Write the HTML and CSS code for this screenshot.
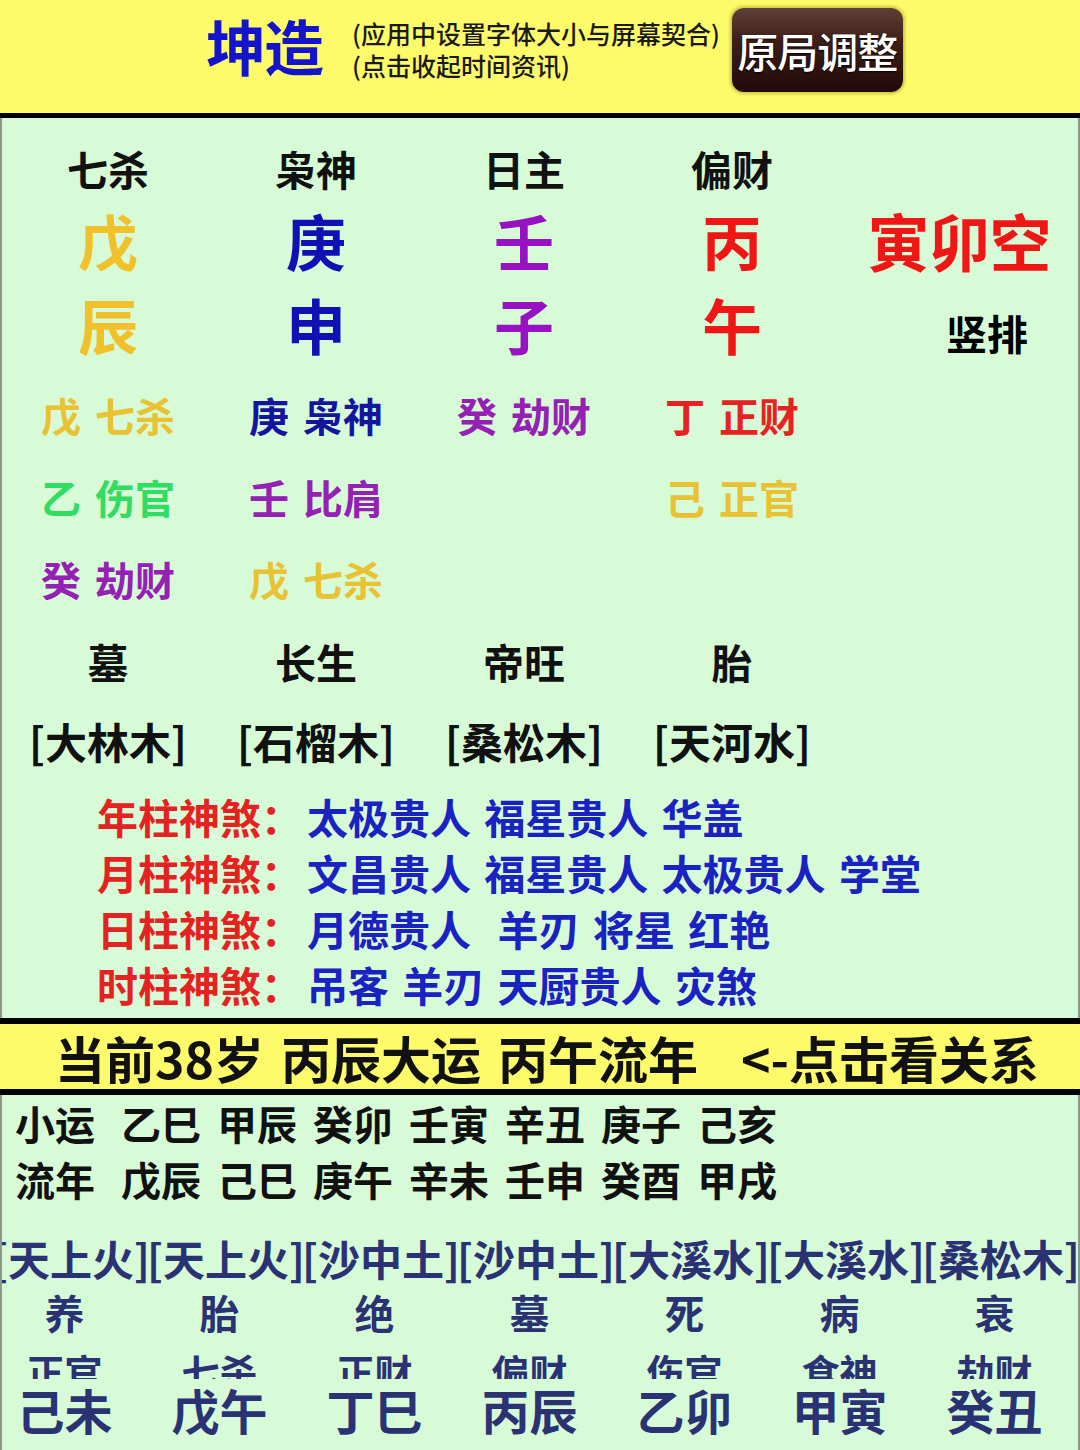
FILE: index.html
```html
<!DOCTYPE html>
<html lang="zh-CN">
<head>
<meta charset="utf-8">
<title>坤造</title>
<link rel="stylesheet" href="styles.css">
</head>
<body>
<header class="top">
  <div class="title">坤造</div>
  <div class="notes">
    <div>(应用中设置字体大小与屏幕契合)</div>
    <div>(点击收起时间资讯)</div>
  </div>
  <div class="btn">原局调整</div>
</header>

<section class="chart">
  <div class="row labels">
    <div>七杀</div><div>枭神</div><div>日主</div><div>偏财</div><div></div>
  </div>
  <div class="row big">
    <div class="c-yel">戊</div><div class="c-blu">庚</div><div class="c-pur">壬</div><div class="c-red">丙</div><div class="c-red kong">寅卯空</div>
  </div>
  <div class="row big base">
    <div class="c-yel">辰</div><div class="c-blu">申</div><div class="c-pur">子</div><div class="c-red">午</div><div class="shu">竖排</div>
  </div>
  <div class="row hid">
    <div class="h-yel"><span>戊</span><span>七杀</span></div>
    <div class="h-blu"><span>庚</span><span>枭神</span></div>
    <div class="h-pur"><span>癸</span><span>劫财</span></div>
    <div class="h-red"><span>丁</span><span>正财</span></div>
    <div></div>
  </div>
  <div class="row hid">
    <div class="h-grn"><span>乙</span><span>伤官</span></div>
    <div class="h-pur"><span>壬</span><span>比肩</span></div>
    <div></div>
    <div class="h-yel"><span>己</span><span>正官</span></div>
    <div></div>
  </div>
  <div class="row hid">
    <div class="h-pur"><span>癸</span><span>劫财</span></div>
    <div class="h-yel"><span>戊</span><span>七杀</span></div>
    <div></div><div></div><div></div>
  </div>
  <div class="row stage">
    <div>墓</div><div>长生</div><div>帝旺</div><div>胎</div><div></div>
  </div>
  <div class="row nayin">
    <div>[大林木]</div><div>[石榴木]</div><div>[桑松木]</div><div>[天河水]</div><div></div>
  </div>

  <div class="shensha">
    <div class="ss"><span class="ss-l">年柱神煞：</span><span class="ss-v">太极贵人 福星贵人 华盖</span></div>
    <div class="ss"><span class="ss-l">月柱神煞：</span><span class="ss-v">文昌贵人 福星贵人 太极贵人 学堂</span></div>
    <div class="ss"><span class="ss-l">日柱神煞：</span><span class="ss-v">月德贵人  羊刃 将星 红艳</span></div>
    <div class="ss"><span class="ss-l">时柱神煞：</span><span class="ss-v">吊客 羊刃 天厨贵人 灾煞</span></div>
  </div>
</section>

<div class="band">
  <span>当前38岁</span><span>丙辰大运</span><span>丙午流年</span><span class="click">&lt;-点击看关系</span>
</div>

<section class="luck">
  <div class="seq"><span class="seq-h">小运</span><span>乙巳</span><span>甲辰</span><span>癸卯</span><span>壬寅</span><span>辛丑</span><span>庚子</span><span>己亥</span></div>
  <div class="seq"><span class="seq-h">流年</span><span>戊辰</span><span>己巳</span><span>庚午</span><span>辛未</span><span>壬申</span><span>癸酉</span><span>甲戌</span></div>

  <div class="dy dy-na">
    <div>[天上火]</div><div>[天上火]</div><div>[沙中土]</div><div>[沙中土]</div><div>[大溪水]</div><div>[大溪水]</div><div>[桑松木]</div><div>[桑松木]</div>
  </div>
  <div class="dy dy-st">
    <div>养</div><div>胎</div><div>绝</div><div>墓</div><div>死</div><div>病</div><div>衰</div><div>帝旺</div>
  </div>
  <div class="dy dy-ss">
    <div>正官</div><div>七杀</div><div>正财</div><div>偏财</div><div>伤官</div><div>食神</div><div>劫财</div><div>比肩</div>
  </div>
  <div class="dy dy-gz">
    <div>己未</div><div>戊午</div><div>丁巳</div><div>丙辰</div><div>乙卯</div><div>甲寅</div><div>癸丑</div><div>壬子</div>
  </div>
</section>
</body>
</html>
```

FILE: styles.css
```css
html, body {
  margin: 0;
  padding: 0;
}
body {
  width: 1080px;
  height: 1450px;
  overflow: hidden;
  background: #d6fbd6;
  font-family: "Noto Sans CJK SC", "Noto Sans", sans-serif;
  color: #111;
}

/* ---------- header ---------- */
.top {
  height: 113px;
  background: #fdfb6a;
  border-bottom: 5px solid #000;
  display: flex;
  align-items: center;
  padding-left: 206px;
}
.title {
  font-size: 60px;
  font-weight: 700;
  color: #1414cc;
  line-height: 1;
  margin-top: -24px;
  letter-spacing: -2px;
}
.notes {
  margin-left: 30px;
  font-size: 25px;
  line-height: 32px;
  font-weight: 500;
  color: #1a1a1a;
  margin-top: -16px;
}
.btn {
  margin-left: 12px;
  margin-top: -13px;
  width: 171px;
  height: 84px;
  border-radius: 12px;
  background: linear-gradient(#5e4038 0%, #3d1f17 40%, #22090a 100%);
  box-shadow: 0 0 3px 2px rgba(150, 130, 20, 0.45);
  color: #fff;
  font-size: 41px;
  font-weight: 500;
  display: flex;
  align-items: center;
  justify-content: center;
  text-shadow: 0 1px 2px #000;
  letter-spacing: -1px;
}

/* ---------- chart ---------- */
.chart {
  border-left: 2px solid #8c9a8c;
  border-right: 2px solid #8c9a8c;
  padding: 20px 0 6px 2px;
}
.row {
  display: grid;
  grid-template-columns: 208px 208px 208px 208px 1fr;
  text-align: center;
}
.labels {
  font-size: 41px;
  line-height: 60px;
  font-weight: 700;
}
.big {
  font-size: 60px;
  line-height: 84px;
  font-weight: 700;
}
.base {
  align-items: baseline;
}
.kong {
  font-size: 62px;
  letter-spacing: -1px;
  padding-left: 4px;
}
.shu {
  font-size: 41px;
  font-weight: 700;
  color: #000;
  padding-left: 60px;
}
.c-yel { color: #f1c12c; }
.c-blu { color: #1010b4; }
.c-pur { color: #9612c2; }
.c-red { color: #f01616; }

.hid {
  font-size: 40px;
  line-height: 82px;
  font-weight: 700;
}
.hid div {
  display: flex;
  justify-content: center;
  gap: 14px;
}
.h-yel { color: #e8c232; }
.h-blu { color: #14149e; }
.h-pur { color: #9420b4; }
.h-red { color: #e82222; }
.h-grn { color: #30dc62; }

.stage {
  font-size: 41px;
  line-height: 82px;
  font-weight: 700;
}
.nayin {
  font-size: 42px;
  line-height: 78px;
  font-weight: 700;
}

.shensha {
  margin-top: 8px;
  padding-left: 93px;
  font-size: 41px;
  line-height: 56px;
  font-weight: 700;
}
.ss {
  display: flex;
  white-space: pre;
}
.ss-l {
  color: #e42222;
  width: 210px;
}
.ss-v {
  color: #1a22c2;
  word-spacing: 4px;
}

/* ---------- band ---------- */
.band {
  border-top: 6px solid #000;
  border-bottom: 6px solid #000;
  background: #fdfb6a;
  height: 65px;
  display: flex;
  align-items: center;
  padding-left: 55px;
  font-size: 50px;
  font-weight: 700;
  color: #111;
  gap: 17px;
}
.band .click {
  margin-left: 26px;
}

/* ---------- luck ---------- */
.luck {
  border-left: 2px solid #8c9a8c;
  border-right: 2px solid #8c9a8c;
  overflow: hidden;
  height: 1352px;
}
.seq {
  display: flex;
  gap: 16px;
  padding-left: 13px;
  font-size: 40px;
  line-height: 56px;
  font-weight: 700;
  color: #111;
}
.seq .seq-h {
  margin-right: 10px;
}
.dy {
  display: grid;
  grid-template-columns: repeat(8, 155px);
  margin-left: -15px;
  text-align: center;
  color: #2b3274;
  font-weight: 700;
  white-space: nowrap;
}
.dy-na {
  margin-top: 24px;
  margin-left: -10px;
  font-size: 42px;
  line-height: 54px;
}
.dy-st {
  font-size: 40px;
  line-height: 54px;
}
.dy-ss {
  font-size: 38px;
  line-height: 64px;
  height: 40px;
  overflow: hidden;
}
.dy-gz {
  font-size: 48px;
  line-height: 60px;
}
```
